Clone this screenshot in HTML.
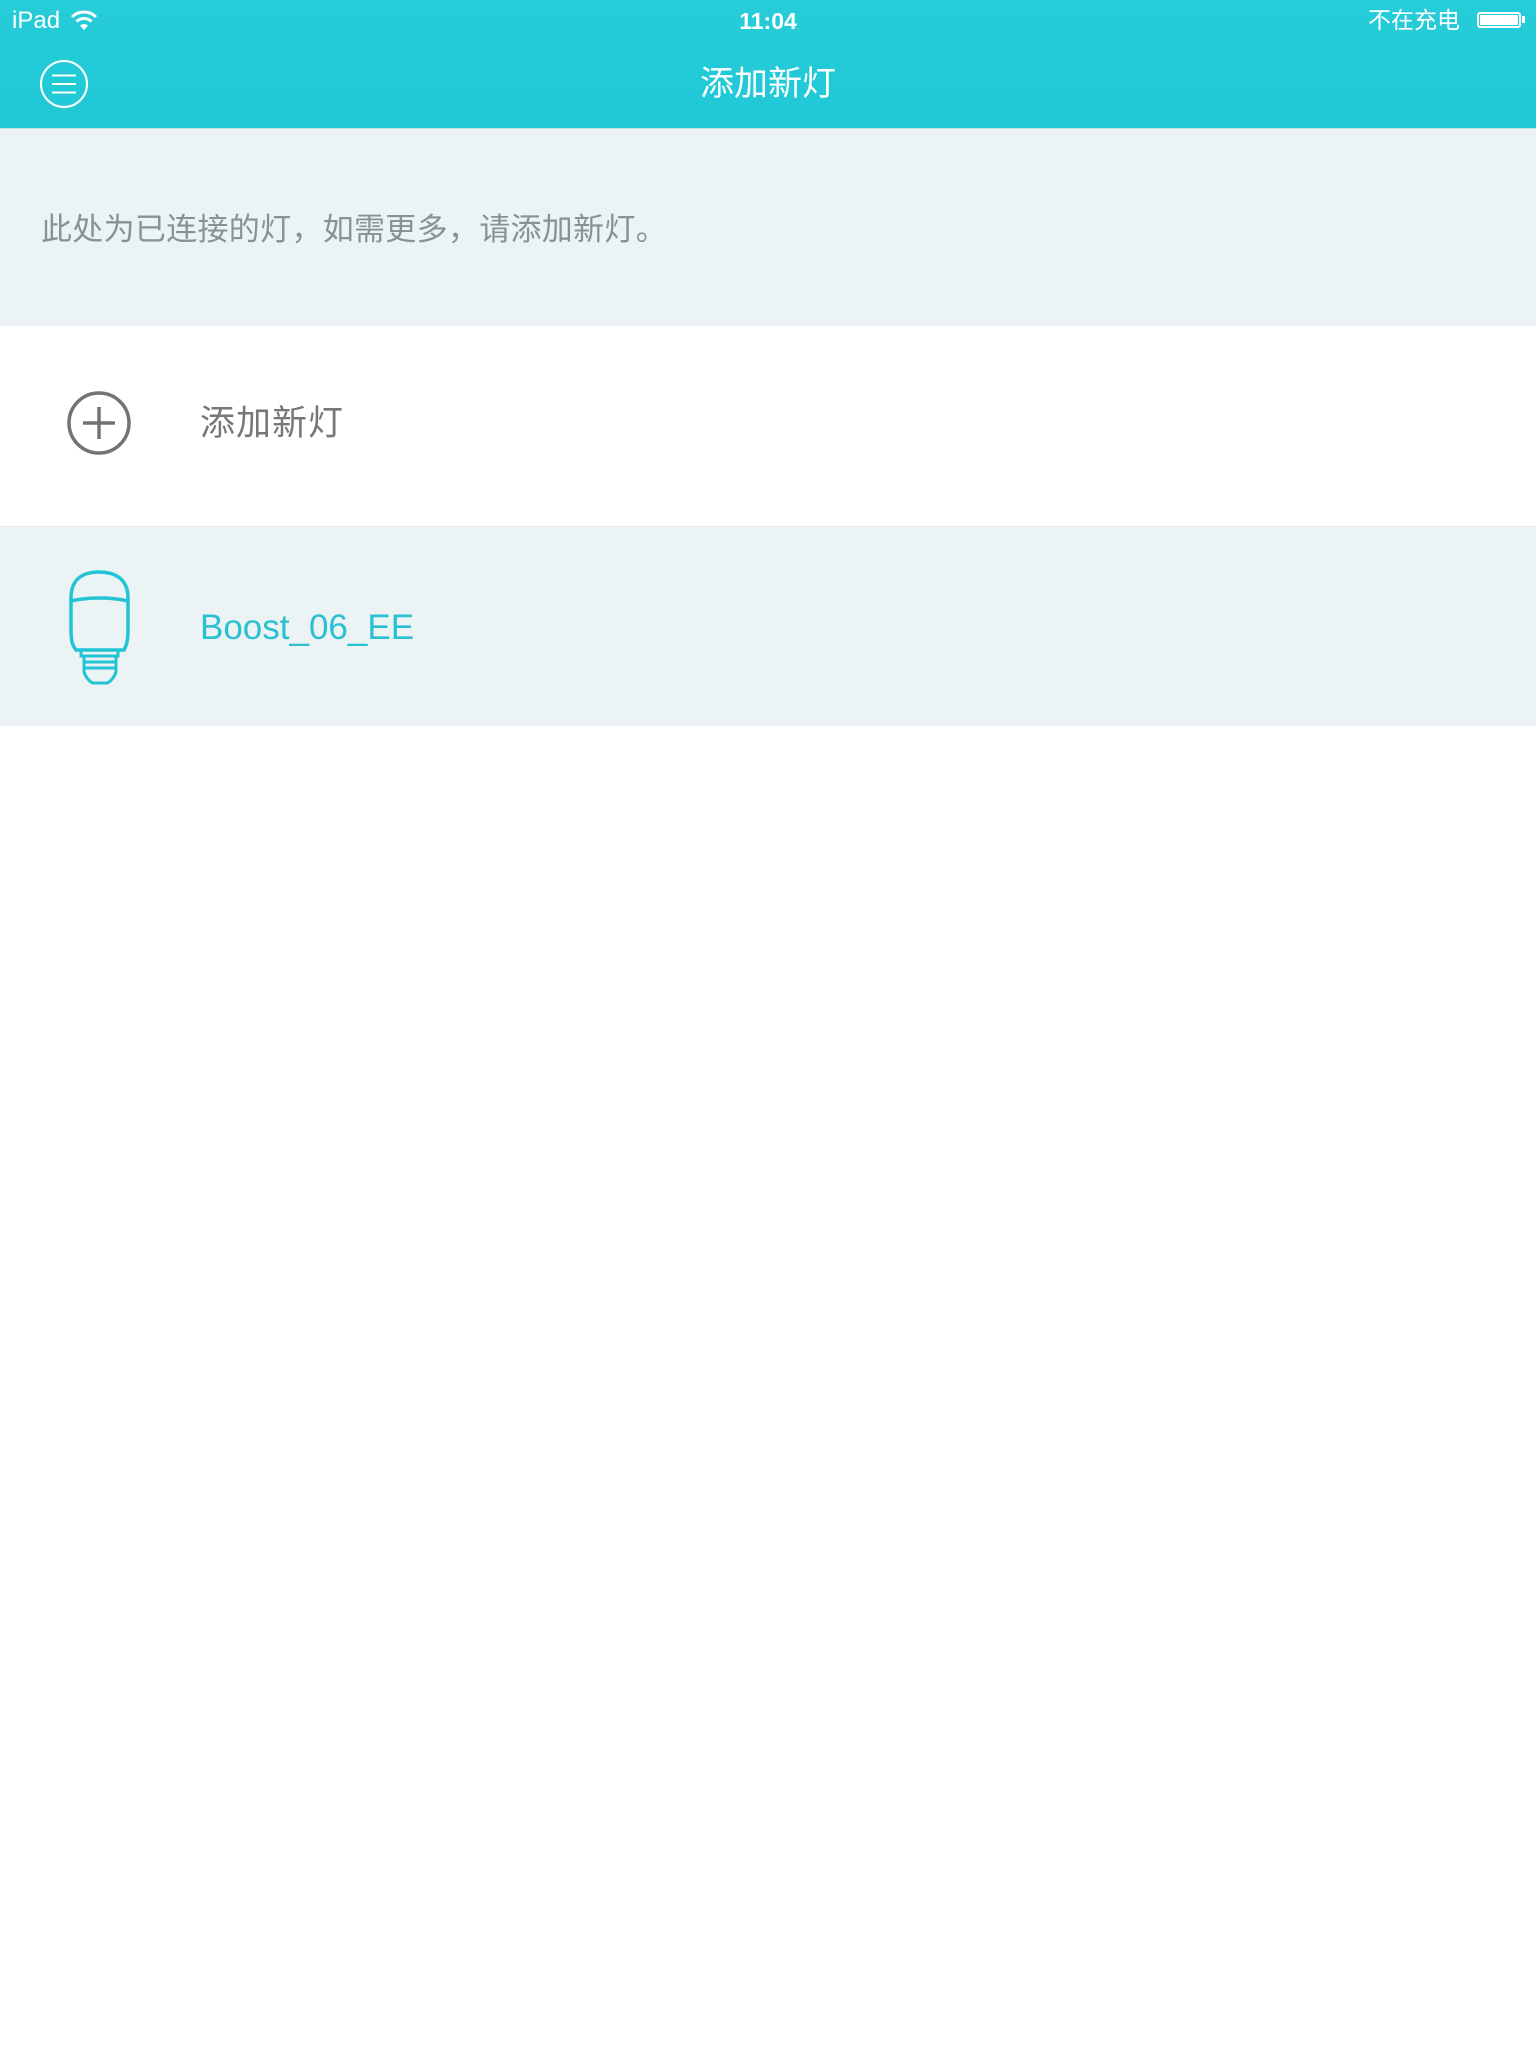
<!DOCTYPE html>
<html><head><meta charset="utf-8"><style>
body{margin:0;width:1536px;height:2048px;background:#fff;font-family:"Liberation Sans","Noto Sans CJK SC",sans-serif;position:relative;overflow:hidden}
.hdr{position:absolute;left:0;top:0;width:1536px;height:128px;background:linear-gradient(#26cdd9,#20c7d5)}
.abs{position:absolute;white-space:nowrap}
</style></head><body>
<div class="hdr"></div>
<div class="abs" style="left:12px;top:6px;font-size:24px;color:#fff;line-height:30px">iPad</div>
<svg class="abs" style="left:70px;top:9px" width="28" height="22" viewBox="0 0 28 22"><path d="M2 8 A17 17 0 0 1 26 8" stroke="#fff" stroke-width="3" fill="none"/><path d="M6.5 12.5 A11 11 0 0 1 21.5 12.5" stroke="#fff" stroke-width="3" fill="none"/><path d="M10 16.5 L14 21 L18 16.5 A6 6 0 0 0 10 16.5Z" fill="#fff"/></svg>
<div class="abs" style="left:0;width:1536px;text-align:center;top:6px;font-size:23px;color:#fff;font-weight:bold;line-height:30px">11:04</div>
<div class="abs" style="left:1368px;top:5px;font-size:23px;color:#fff;line-height:30px">不在充电</div>
<div class="abs" style="left:1477px;top:12px;width:40px;height:12px;border:2px solid #fff;border-radius:3px"><div style="margin:1px;height:10px;background:#fff;border-radius:1px"></div></div>
<div class="abs" style="left:1522px;top:16px;width:3px;height:7px;background:#fff"></div>
<svg class="abs" style="left:38px;top:58px" width="52" height="52"><circle cx="26" cy="26" r="23" stroke="#fff" stroke-width="2" fill="none"/><path d="M14 17.5H38M14 26H38M14 34.5H38" stroke="#fff" stroke-width="2"/></svg>
<div class="abs" style="left:0;width:1536px;text-align:center;top:62px;font-size:34px;color:#fff;line-height:44px">添加新灯</div>
<div class="abs" style="left:0;top:128px;width:1536px;height:198px;background:#ebf3f5;border-top:1px solid #bfe3e8;box-sizing:border-box"></div>
<div class="abs" style="left:41px;top:210px;font-size:31px;letter-spacing:0.3px;color:#8a9196;line-height:40px">此处为已连接的灯，如需更多，请添加新灯。</div>
<svg class="abs" style="left:66px;top:390px" width="66" height="66"><circle cx="33" cy="33" r="30" stroke="#737373" stroke-width="3.5" fill="none"/><path d="M17 33H49M33 17V49" stroke="#737373" stroke-width="3.5"/></svg>
<div class="abs" style="left:200px;top:402px;font-size:35px;letter-spacing:1px;color:#777;line-height:44px">添加新灯</div>
<div class="abs" style="left:0;top:526px;width:1536px;height:200px;background:#ebf3f5;border-top:1px solid #e2e8ea;box-sizing:border-box"></div>
<svg class="abs" style="left:66px;top:568px" width="68" height="120" viewBox="0 0 68 120"><path d="M5 30 C5 10 18 4 33 4 C48 4 62 10 62 30 L62 60 C62 75 60 78 58 82 L10 82 C7 78 5 75 5 60 Z M5 33 C22 29 45 29 62 33" stroke="#22c3d4" stroke-width="3.5" fill="none"/><path d="M15 82 L15 88 L52 88 L52 82 M18 88 L18 104 C20 110 24 114 27 115 L41 115 C44 114 48 110 50 104 L50 88 M19 94 L49 94 M19 100 L49 100" stroke="#22c3d4" stroke-width="3" fill="none"/></svg>
<div class="abs" style="left:200px;top:606px;font-size:35px;color:#2ac0d3;line-height:44px">Boost_06_EE</div>
</body></html>
